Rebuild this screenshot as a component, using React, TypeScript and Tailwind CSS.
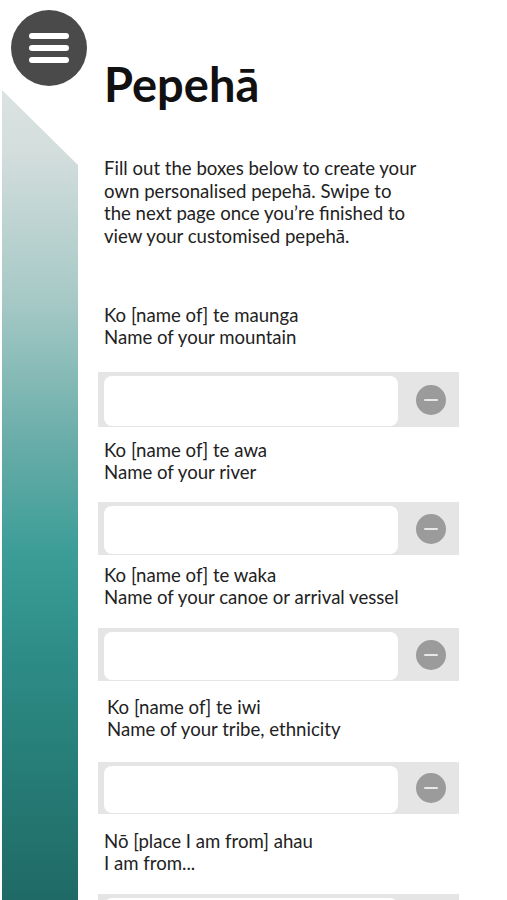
import React from "react";

const sections = [
  { a: "Ko [name of] te maunga", b: "Name of your mountain", mt: "mt-[57px]", gap: "mt-[24px]", h: "h-[55px]", indent: "pl-[6px]" },
  { a: "Ko [name of] te awa", b: "Name of your river", mt: "mt-[12px]", gap: "mt-[19px]", h: "h-[53px]", indent: "pl-[6px]" },
  { a: "Ko [name of] te waka", b: "Name of your canoe or arrival vessel", mt: "mt-[9px]", gap: "mt-[20px]", h: "h-[53px]", indent: "pl-[6px]" },
  { a: "Ko [name of] te iwi", b: "Name of your tribe, ethnicity", mt: "mt-[15px]", gap: "mt-[22px]", h: "h-[52px]", indent: "pl-[9px]" },
  { a: "Nō [place I am from] ahau", b: "I am from...", mt: "mt-[16px]", gap: "mt-[20px]", h: "h-[55px]", indent: "pl-[6px]" },
];

function InputRow({ h }: { h: string }) {
  return (
    <div className={`flex ${h} w-[361px] bg-[#e5e5e5]`}>
      <div className="ml-[6px] mt-[4px] mb-[1px] w-[294px] rounded-[8px] bg-white" />
      <div className="flex flex-1 items-center justify-center pl-[5px]">
        <div className="flex h-[30px] w-[30px] items-center justify-center rounded-full bg-[#9b9b9b]">
          <div className="h-[2px] w-[14px] rounded-full bg-[#e8e8e8]" />
        </div>
      </div>
    </div>
  );
}

export default function App() {
  return (
    <div
      className="relative flex h-[900px] w-[507px] overflow-hidden bg-white text-[#222]"
      style={{ fontFamily: "Lato, 'Open Sans', sans-serif" }}
    >
      <button className="absolute left-[11px] top-[10px] flex h-[76px] w-[76px] flex-col items-center justify-center gap-[6px] rounded-full bg-[#4a4a4a]">
        <span className="block h-[6px] w-[40px] rounded-full bg-white" />
        <span className="block h-[6px] w-[40px] rounded-full bg-white" />
        <span className="block h-[6px] w-[40px] rounded-full bg-white" />
      </button>

      <div className="ml-[2px] flex w-[76px] flex-col pt-[90px]">
        <div className="flex-1 bg-[linear-gradient(180deg,#dbe3e2_0%,#d2dddc_8%,#a6c9c6_26%,#67aca8_44%,#3c9d97_57%,#2d8c86_70%,#1f6a66_100%)] [clip-path:polygon(0_0,100%_75px,100%_100%,0_100%)]" />
      </div>

      <div className="ml-[20px] flex w-[361px] flex-col pt-[61px]">
        <h1 className="pl-[6px] text-[47px] font-bold leading-none text-[#111]">Pepehā</h1>
        <p className="mt-[49px] whitespace-nowrap pl-[6px] text-[18.6px] leading-[22.5px]">
          Fill out the boxes below to create your
          <br />
          own personalised pepehā. Swipe to
          <br />
          the next page once you’re finished to
          <br />
          view your customised pepehā.
        </p>
        {sections.map((s, i) => (
          <div key={i} className="flex flex-col">
            <div className={`${s.mt} ${s.indent} text-[18.6px] leading-[22px]`}>
              <div>{s.a}</div>
              <div>{s.b}</div>
            </div>
            <div className={s.gap}>
              <InputRow h={s.h} />
            </div>
          </div>
        ))}
      </div>
    </div>
  );
}
